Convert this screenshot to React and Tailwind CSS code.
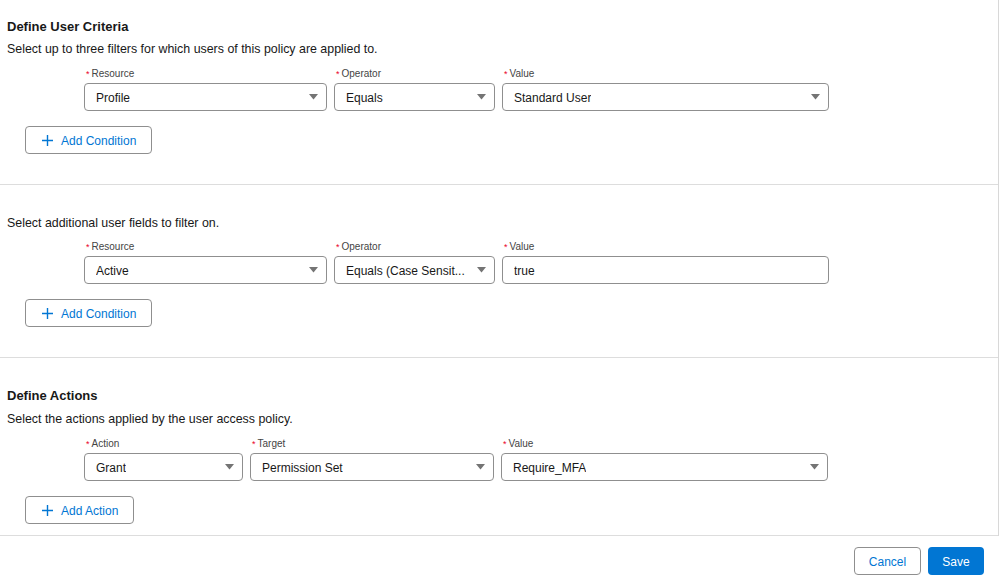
import React from "react";

const font = { fontFamily: '"Liberation Sans", Arial, sans-serif' };

function Label({ children }) {
  return (
    <div className="h-[15px] flex items-center pt-[1px] pl-[2px] text-[10px] leading-[14px] text-[#444444]">
      <span className="text-[#ea001e] mr-[2px] text-[9px]">*</span>
      {children}
    </div>
  );
}

function Caret() {
  return (
    <svg width="9" height="6" viewBox="0 0 9 6" className="shrink-0">
      <path d="M0 0 L9 0 L4.5 5.5 Z" fill="#747474" />
    </svg>
  );
}

function Select({ label, value, width, caret = true }) {
  return (
    <div className="flex flex-col gap-[2px]" style={{ width }}>
      <Label>{label}</Label>
      <div className="h-[28px] flex items-center justify-between border border-[#8f8f8f] rounded-[4px] pl-[11px] pr-[8px] bg-white">
        <span className="text-[12px] text-[#181818] truncate pt-[1px]">{value}</span>
        {caret && <Caret />}
      </div>
    </div>
  );
}

function AddButton({ children, width }) {
  return (
    <div
      className="h-[28px] flex items-center border border-[#8f8f8f] rounded-[4px] pl-[15px] bg-white"
      style={{ width }}
    >
      <svg width="11" height="11" viewBox="0 0 11 11" className="mr-[8px] ml-[1px]">
        <path d="M5.5 0 V11 M0 5.5 H11" stroke="#0176d3" strokeWidth="1.4" />
      </svg>
      <span className="text-[12px] text-[#0176d3] pt-[1px]">{children}</span>
    </div>
  );
}

export default function App() {
  return (
    <div className="w-[1000px] h-[587px] bg-white flex flex-col overflow-hidden" style={font}>
      <div className="w-[999px] border-r border-[#d8d8d8] flex flex-col">
        {/* Section 1 */}
        <section className="h-[185px] border-b border-[#dddddd] pt-[18px] pl-[7px]">
          <h2 className="text-[13px] leading-[18px] font-bold text-[#181818]">Define User Criteria</h2>
          <p className="mt-[4px] text-[12.4px] leading-[18px] text-[#181818]">
            Select up to three filters for which users of this policy are applied to.
          </p>
          <div className="mt-[8px] ml-[77px] flex gap-[7px]">
            <Select label="Resource" value="Profile" width={243} />
            <Select label="Operator" value="Equals" width={161} />
            <Select label="Value" value="Standard User" width={327} />
          </div>
          <div className="mt-[15px] ml-[18px]">
            <AddButton width={127}>Add Condition</AddButton>
          </div>
        </section>

        {/* Section 2 */}
        <section className="h-[173px] border-b border-[#dddddd] pt-[29px] pl-[7px]">
          <p className="text-[12.4px] leading-[18px] text-[#181818]">Select additional user fields to filter on.</p>
          <div className="mt-[7px] ml-[77px] flex gap-[7px]">
            <Select label="Resource" value="Active" width={243} />
            <Select label="Operator" value="Equals (Case Sensit..." width={161} />
            <Select label="Value" value="true" width={327} caret={false} />
          </div>
          <div className="mt-[15px] ml-[18px]">
            <AddButton width={127}>Add Condition</AddButton>
          </div>
        </section>

        {/* Section 3 */}
        <section className="h-[178px] border-b border-[#dddddd] pt-[29px] pl-[7px]">
          <h2 className="text-[13px] leading-[18px] font-bold text-[#181818]">Define Actions</h2>
          <p className="mt-[5px] text-[12.4px] leading-[18px] text-[#181818]">
            Select the actions applied by the user access policy.
          </p>
          <div className="mt-[8px] ml-[77px] flex gap-[7px]">
            <Select label="Action" value="Grant" width={159} />
            <Select label="Target" value="Permission Set" width={244} />
            <Select label="Value" value="Require_MFA" width={327} />
          </div>
          <div className="mt-[15px] ml-[18px]">
            <AddButton width={109}>Add Action</AddButton>
          </div>
        </section>
      </div>

      {/* Footer */}
      <footer className="flex justify-end gap-[7px] pt-[11px] pr-[16px]">
        <div className="h-[28px] w-[67px] flex items-center justify-center border border-[#8f8f8f] rounded-[4px] text-[12px] text-[#0176d3] bg-white pt-[1px]">
          Cancel
        </div>
        <div className="h-[28px] w-[56px] flex items-center justify-center rounded-[4px] text-[12px] text-white bg-[#0176d3] pt-[1px]">
          Save
        </div>
      </footer>
    </div>
  );
}
